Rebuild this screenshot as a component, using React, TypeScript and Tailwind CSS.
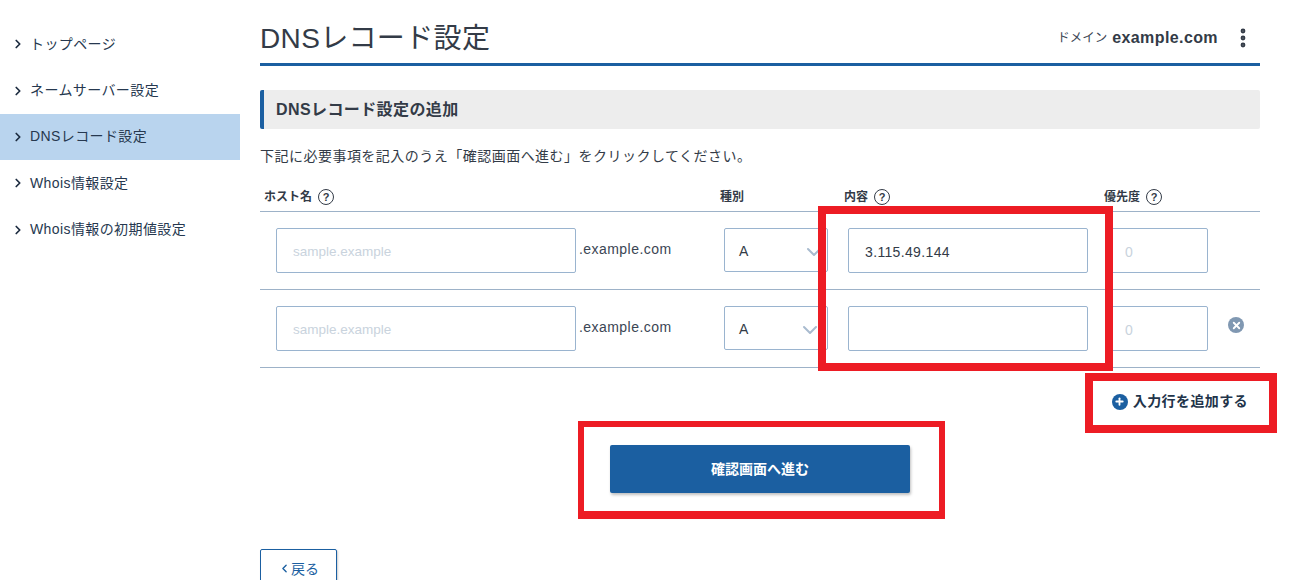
import { ChevronDown, ChevronLeft, ChevronRight, EllipsisVertical, Plus, X } from 'lucide-react'

const navItems = ['トップページ', 'ネームサーバー設定', 'DNSレコード設定', 'Whois情報設定', 'Whois情報の初期値設定']

function HelpIcon() {
  return (
    <span className="ml-[6px] inline-flex h-[16px] w-[16px] items-center justify-center rounded-full border-[1.5px] border-[#333b47] text-[11px] font-bold leading-none text-[#333b47]">
      ?
    </span>
  )
}

function RecordRow({ value, removable, chevronClass }: { value: string; removable?: boolean; chevronClass: string }) {
  return (
    <div className="flex h-[78px] items-start border-b border-[#9db2c8] pt-[16px]">
      <input
        readOnly
        placeholder="sample.example"
        className="ml-[16px] h-[45px] w-[300px] rounded-[2px] border border-[#9ab4cf] px-[16px] pt-[2px] text-[13.5px] outline-none placeholder:text-[#c9d3dd]"
      />
      <span className="ml-[3px] mt-[11px] w-[145px] text-[14px] leading-[20px] tracking-[0.45px] text-[#3b4654]">.example.com</span>
      <div className="relative h-[44px] w-[104px] rounded-[2px] border border-[#9ab4cf]">
        <span className="absolute left-[14px] top-[12px] text-[14px] leading-[20px] text-[#333b47]">A</span>
        <ChevronDown className={`absolute top-[11px] h-[24px] w-[24px] text-[#a9bbcf] ${chevronClass}`} strokeWidth={2} />
      </div>
      <input
        readOnly
        value={value}
        className="ml-[20px] h-[45px] w-[240px] rounded-[2px] border border-[#9ab4cf] px-[16px] pt-[2px] text-[14px] tracking-[0.35px] text-[#333b47] outline-none"
      />
      <input
        readOnly
        placeholder="0"
        className="ml-[20px] h-[45px] w-[100px] rounded-[2px] border border-[#9ab4cf] px-[16px] pt-[2px] text-[14px] outline-none placeholder:text-[#c9d3dd]"
      />
      {removable && (
        <span className="ml-[20px] mt-[11px] flex h-[16px] w-[16px] items-center justify-center rounded-full bg-[#8098b2]">
          <X className="h-[11px] w-[11px] text-white" strokeWidth={4} />
        </span>
      )}
    </div>
  )
}

export default function App() {
  return (
    <div
      className="relative flex h-[580px] w-[1291px] overflow-hidden bg-white text-[#333b47]"
      style={{ fontFamily: '"Liberation Sans", "Noto Sans CJK JP", sans-serif' }}
    >
      {/* Sidebar */}
      <aside className="w-[240px] shrink-0 pt-[21px]">
        {navItems.map((item, i) => (
          <div
            key={item}
            className={`flex h-[46.4px] items-center pl-[11px] text-[14px] tracking-[0.4px] text-[#26384f] ${i === 2 ? 'bg-[#b9d4ee]' : ''}`}
          >
            <ChevronRight className="mr-[5px] h-[14px] w-[14px] text-[#1d2c40]" strokeWidth={3} />
            {item}
          </div>
        ))}
      </aside>

      {/* Main */}
      <main className="ml-[20px] w-[1000px]">
        <header className="flex h-[66px] items-center justify-between border-b-[3px] border-[#1b5fa1] pt-[13px]">
          <h1 className="mt-[2px] text-[28px] font-normal leading-[40px] tracking-[0.35px] text-[#333b47]">DNSレコード設定</h1>
          <div className="flex items-center">
            <span className="text-[12.5px] text-[#3b4654]">ドメイン</span>
            <span className="ml-[5px] text-[16px] font-bold tracking-[0.4px] text-[#333b47]">example.com</span>
            <EllipsisVertical className="ml-[13px] mr-[5px] h-[24px] w-[24px] text-[#333b47]" strokeWidth={2.8} />
          </div>
        </header>

        <h2 className="mt-[24px] flex h-[39px] items-center rounded-[2px] border-l-[4px] border-[#1b5fa1] bg-[#ededed] pl-[12px] text-[16px] font-bold tracking-[0.4px] text-[#333b47]">
          DNSレコード設定の追加
        </h2>

        <p className="mt-[17px] text-[14px] leading-[20px] tracking-[0.48px] text-[#333b47]">下記に必要事項を記入のうえ「確認画面へ進む」をクリックしてください。</p>

        <div className="mt-[22px] flex h-[24px] items-start border-b border-[#9db2c8] pt-[1px] text-[12px] font-bold leading-[16px] text-[#333b47]">
          <span className="ml-[4px] flex w-[456px] items-center">ホスト名<HelpIcon /></span>
          <span className="w-[124px]">種別</span>
          <span className="flex w-[260px] items-center">内容<HelpIcon /></span>
          <span className="flex items-center">優先度<HelpIcon /></span>
        </div>

        <RecordRow value="3.115.49.144" chevronClass="right-[1px]" />
        <RecordRow value="" removable chevronClass="right-[5px]" />

        <div className="flex h-[67px] items-center justify-end pr-[12px]">
          <span className="flex h-[16px] w-[16px] items-center justify-center rounded-full bg-[#1b5fa1]">
            <Plus className="h-[11px] w-[11px] text-white" strokeWidth={4} />
          </span>
          <span className="ml-[5px] text-[14px] font-bold tracking-[0.4px] text-[#22344a]">入力行を追加する</span>
        </div>

        <div className="flex justify-center">
          <button className="mt-[10px] flex h-[48px] w-[300px] items-center justify-center rounded-[2px] bg-[#1b5fa1] text-[14px] font-bold text-white shadow-[1px_2px_3px_rgba(0,0,0,0.25)]">
            確認画面へ進む
          </button>
        </div>

        <button className="mt-[56px] flex h-[44px] w-[77px] items-start justify-center rounded-[2px] border border-[#1b5fa1] pt-[9px] text-[14px] leading-[20px] text-[#1b5fa1] shadow-[1px_1px_2px_rgba(0,0,0,0.2)]">
          <ChevronLeft className="mt-[3px] h-[13px] w-[13px]" strokeWidth={2.5} />
          戻る
        </button>
      </main>

      {/* Annotation boxes drawn over the screenshot */}
      <div className="absolute left-[818px] top-[206px] h-[165px] w-[295px] border-[8px] border-[#ed1c24]" />
      <div className="absolute left-[1085px] top-[373px] h-[60px] w-[192px] border-[8px] border-[#ed1c24]" />
      <div className="absolute left-[578px] top-[421px] h-[98px] w-[367px] border-[6px] border-b-[8px] border-[#ed1c24]" />
    </div>
  )
}
